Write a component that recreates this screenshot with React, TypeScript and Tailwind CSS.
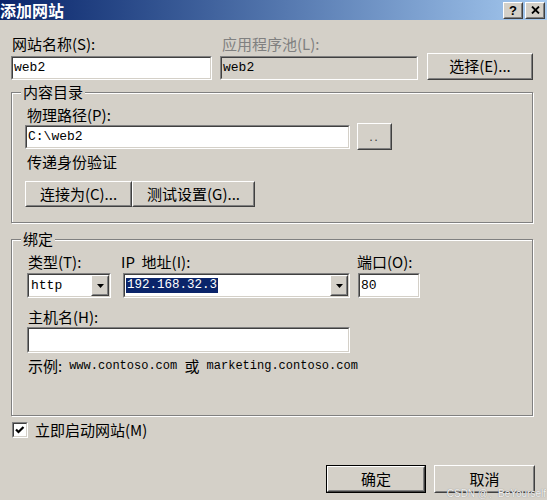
import React from "react";

type P = { className?: string; children?: React.ReactNode };

function Raised({ className = "", children }: P) {
  return (
    <div className={"border border-t-white border-l-white border-r-[#404040] border-b-[#404040] bg-[#d4d0c8] " + className}>
      <div className="h-full w-full border border-t-[#d4d0c8] border-l-[#d4d0c8] border-r-[#808080] border-b-[#808080] flex items-center justify-center">
        {children}
      </div>
    </div>
  );
}

function Sunken({ className = "", inner = "bg-white", children }: P & { inner?: string }) {
  return (
    <div className={"border border-t-[#808080] border-l-[#808080] border-r-white border-b-white " + className}>
      <div className={"h-full w-full border border-t-[#404040] border-l-[#404040] border-r-[#d4d0c8] border-b-[#d4d0c8] flex items-center overflow-hidden " + inner}>
        {children}
      </div>
    </div>
  );
}

function Arrow() {
  return (
    <svg width="7" height="4" viewBox="0 0 7 4">
      <path d="M0 0 H7 L3.5 4 Z" fill="#000" />
    </svg>
  );
}

function Combo({ className = "", children }: P) {
  return (
    <Sunken className={className}>
      <div className="flex-1 h-full flex items-center min-w-0">{children}</div>
      <Raised className="w-[18px] h-full">
        <Arrow />
      </Raised>
    </Sunken>
  );
}

function Group({ title, className = "", children }: P & { title: string }) {
  return (
    <div className={"relative border border-[#808080] shadow-[inset_1px_1px_0_#ffffff,1px_1px_0_#ffffff] " + className}>
      <span className="absolute left-[9px] top-[-11px] bg-[#d4d0c8] px-[2px] leading-[20px] text-[15px]">{title}</span>
      {children}
    </div>
  );
}

const mono = "font-['Liberation_Mono',monospace]";

export default function App() {
  return (
    <div className="w-[547px] h-[500px] bg-[#d4d0c8] overflow-hidden relative font-['Noto_Sans_CJK_SC',sans-serif] text-[15px] text-black">
      {/* Title bar */}
      <div className="h-[20px] flex items-center bg-linear-to-r from-[#0a246a] to-[#a6caf0]">
        <span className="text-white font-bold text-[16px] leading-[20px]">添加网站</span>
        <div className="ml-auto flex gap-[2px] pr-[2px]">
          <Raised className="w-[20px] h-[17px]">
            <span className="font-['Liberation_Sans',sans-serif] text-[13px] font-bold leading-none">?</span>
          </Raised>
          <Raised className="w-[20px] h-[17px]">
            <svg width="9" height="8" viewBox="0 0 9 8">
              <path d="M1 0.5 L8 7.5 M8 0.5 L1 7.5" stroke="#000" strokeWidth="1.8" />
            </svg>
          </Raised>
        </div>
      </div>

      <div className="pl-[11px]">
        {/* Row 1 */}
        <div className="flex items-end mt-[14px]">
          <div className="w-[201px] flex flex-col">
            <div className="h-[22px] leading-[20px] pl-[1px]">网站名称(S):</div>
            <Sunken className="h-[24px]">
              <span className={mono + " text-[13px] pl-[1px]"}>web2</span>
            </Sunken>
          </div>
          <div className="w-[198px] ml-[8px] flex flex-col">
            <div className="h-[22px] leading-[20px] pl-[2px] text-[#808080]">应用程序池(L):</div>
            <Sunken className="h-[24px]" inner="bg-[#d4d0c8]">
              <span className={mono + " text-[13px] pl-[1px]"}>web2</span>
            </Sunken>
          </div>
          <Raised className="w-[106px] h-[27px] ml-[9px]">
            <span>选择(E)...</span>
          </Raised>
        </div>

        {/* Content directory group */}
        <Group title="内容目录" className="w-[522px] h-[131px] mt-[12px]">
          <div className="pl-[13px] pt-[12px] flex flex-col">
            <div className="h-[18px] leading-[20px] pl-[2px]">物理路径(P):</div>
            <div className="h-[27px] flex items-center">
              <Sunken className="w-[325px] h-[24px]">
                <span className={mono + " text-[13px] pl-[1px]"}>C:\web2</span>
              </Sunken>
              <Raised className="w-[35px] h-[27px] ml-[7px]">
                <span className="text-[11px] leading-none tracking-[2px] text-[#404040]">..</span>
              </Raised>
            </div>
            <div className="h-[20px] leading-[20px] mt-[2px] pl-[2px]">传递身份验证</div>
            <div className="flex mt-[9px]">
              <Raised className="w-[107px] h-[26px]">
                <span>连接为(C)...</span>
              </Raised>
              <Raised className="w-[123px] h-[26px]">
                <span>测试设置(G)...</span>
              </Raised>
            </div>
          </div>
        </Group>

        {/* Binding group */}
        <Group title="绑定" className="w-[522px] h-[177px] mt-[16px]">
          <div className="pl-[15px] pt-[12px] flex flex-col">
            <div className="flex">
              <div className="w-[84px] flex flex-col">
                <div className="h-[21px] leading-[20px] pl-[1px]">类型(T):</div>
                <Combo className="w-[84px] h-[25px]">
                  <span className={mono + " text-[13px] pl-[2px]"}>http</span>
                </Combo>
              </div>
              <div className="w-[229px] ml-[10px] flex flex-col">
                <div className="h-[21px] leading-[20px]">IP&nbsp; 地址(I):</div>
                <Combo className="ml-[2px] w-[227px] h-[25px]">
                  <span className={mono + " text-[12.5px] leading-[15px] ml-[1px] px-[1px] bg-[#0a246a] text-white"}>192.168.32.3</span>
                </Combo>
              </div>
              <div className="w-[63px] ml-[7px] flex flex-col">
                <div className="h-[21px] leading-[20px]">端口(O):</div>
                <Sunken className="ml-[1px] w-[62px] h-[25px]">
                  <span className={mono + " text-[13px] pl-[1px]"}>80</span>
                </Sunken>
              </div>
            </div>
            <div className="h-[19px] leading-[20px] mt-[9px] pl-[1px]">主机名(H):</div>
            <Sunken className="w-[323px] h-[26px] mt-[1px]" />
            <div className="h-[20px] leading-[20px] mt-[3px] pl-[1px] flex items-center whitespace-pre">
              <span>示例:</span>
              <span className={mono + " text-[12px] ml-[7px]"}>www.contoso.com </span>
              <span>或</span>
              <span className={mono + " text-[12px]"}> marketing.contoso.com</span>
            </div>
          </div>
        </Group>

        {/* Start checkbox */}
        <div className="flex items-center mt-[5px] h-[18px]">
          <Sunken className="w-[16px] h-[16px] ml-[1px]">
            <svg width="12" height="12" viewBox="0 0 12 12">
              <path d="M2 5.5 L4.5 8 L9.5 3" stroke="#000" strokeWidth="2.2" fill="none" />
            </svg>
          </Sunken>
          <span className="ml-[7px] leading-[18px]">立即启动网站(M)</span>
        </div>

        {/* OK / Cancel */}
        <div className="flex justify-end pr-[12px] mt-[26px]">
          <div className="border border-black w-[100px] h-[28px]">
            <Raised className="w-full h-full">
              <span>确定</span>
            </Raised>
          </div>
          <Raised className="w-[101px] h-[28px] ml-[8px]">
            <span>取消</span>
          </Raised>
        </div>
      </div>

      <div className="absolute right-[1px] bottom-[1px] text-[10px] leading-[11px] text-[#f2f2f2] font-['Liberation_Sans',sans-serif] [text-shadow:0_0_1px_#777]">
        CSDN @、BeYourself
      </div>
    </div>
  );
}
